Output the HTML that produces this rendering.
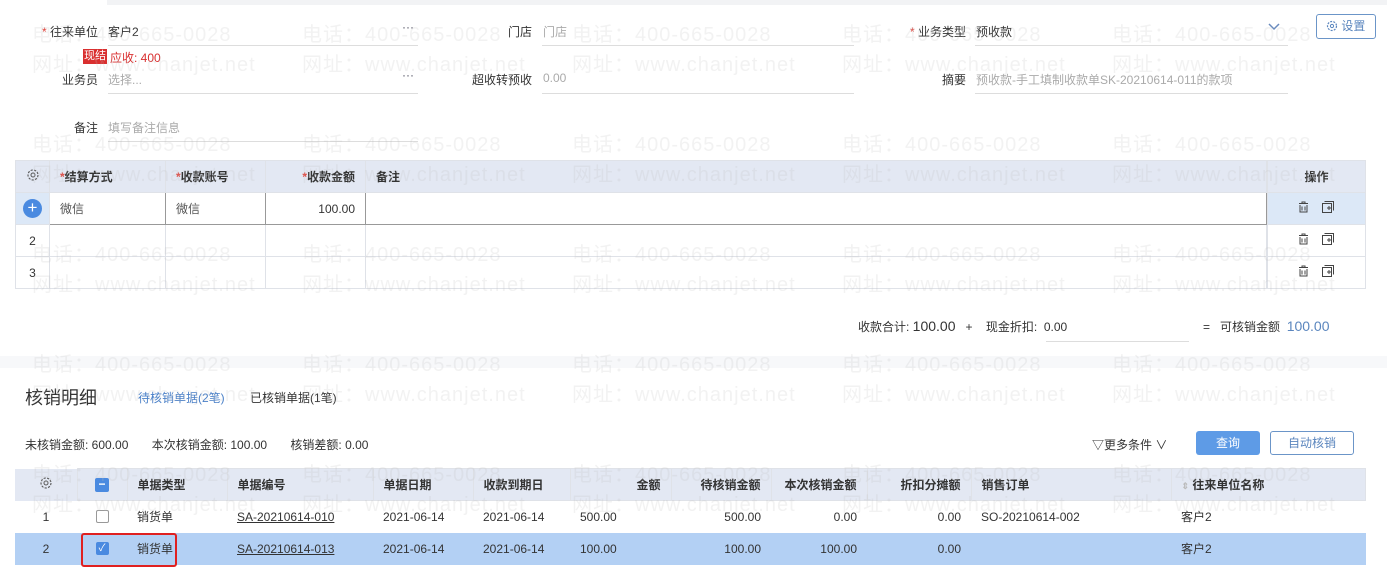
<!DOCTYPE html>
<html><head><meta charset="utf-8"><style>
*{margin:0;padding:0;box-sizing:border-box}
body{width:1387px;height:569px;background:#fff;font-family:"Liberation Sans","Noto Sans CJK SC",sans-serif;font-size:12px;color:#333;position:relative;overflow:hidden}
.a{position:absolute;white-space:nowrap}
.lbl{text-align:right}
.req{color:#e0443c}
.ul{position:absolute;height:1px;background:#ddd}
.ph{color:#aaa}
.wm{position:absolute;color:rgba(190,190,190,.2);font-size:20px;white-space:nowrap;z-index:5;pointer-events:none;letter-spacing:1px}
table{border-collapse:collapse;position:absolute;table-layout:fixed}
td,th{height:32px;font-size:12px;font-weight:normal;padding:0 10px;white-space:nowrap;border:1px solid #dfe2e8}
th{background:#e3e8f3;text-align:left;color:#333;font-weight:bold}
.r{text-align:right}.c{text-align:center}
</style></head><body>
<div class="a" style="left:107px;top:0;width:1280px;height:5px;background:#f2f3f5"></div>

<div class="a lbl" style="left:20px;top:23px;width:78px"><span class="req">* </span>往来单位</div>
<div class="a" style="left:108px;top:23px">客户2</div>
<div class="a" style="left:402px;top:20px;color:#556;">···</div>
<div class="ul" style="left:108px;top:45px;width:310px"></div>
<div class="a lbl" style="left:480px;top:23px;width:52px">门店</div>
<div class="a ph" style="left:543px;top:23px">门店</div>
<div class="ul" style="left:542px;top:45px;width:312px"></div>
<div class="a lbl" style="left:880px;top:23px;width:86px"><span class="req">* </span>业务类型</div>
<div class="a" style="left:976px;top:23px">预收款</div>
<svg class="a" style="left:1267px;top:22px" width="14" height="10"><path d="M2 2l5 5 5-5" fill="none" stroke="#6a8bbd" stroke-width="1.5"/></svg>
<div class="ul" style="left:975px;top:45px;width:313px"></div>
<div class="a" style="left:1316px;top:14px;width:60px;height:25px;border:1px solid #6b95c8;border-radius:3px;color:#5b86be;font-size:12px;line-height:23px;padding-left:9px"><svg width="12" height="12" style="vertical-align:-2px"><circle cx="6" cy="6" r="4.5" fill="none" stroke="#5b86be" stroke-width="1.2" stroke-dasharray="2 1.2"/><circle cx="6" cy="6" r="1.6" fill="none" stroke="#5b86be"/></svg> 设置</div>
<div class="a" style="left:83px;top:49px;width:24px;height:15px;background:#d92f2f;color:#fff;font-size:11px;line-height:15px;text-align:center">现结</div>
<div class="a" style="left:110px;top:49px;color:#d92f2f;font-size:12px">应收: 400</div>

<div class="a lbl" style="left:20px;top:71px;width:78px">业务员</div>
<div class="a ph" style="left:108px;top:71px">选择...</div>
<div class="a" style="left:402px;top:68px;color:#556">···</div>
<div class="ul" style="left:108px;top:93px;width:310px"></div>
<div class="a lbl" style="left:440px;top:71px;width:92px">超收转预收</div>
<div class="a ph" style="left:543px;top:71px">0.00</div>
<div class="ul" style="left:542px;top:93px;width:312px"></div>
<div class="a lbl" style="left:900px;top:71px;width:66px">摘要</div>
<div class="a ph" style="left:976px;top:71px">预收款-手工填制收款单SK-20210614-011的款项</div>
<div class="ul" style="left:975px;top:93px;width:313px"></div>

<div class="a lbl" style="left:40px;top:119px;width:58px">备注</div>
<div class="a ph" style="left:108px;top:119px">填写备注信息</div>
<div class="ul" style="left:108px;top:141px;width:310px"></div>

<table style="left:15px;top:160px;width:1252px">
<colgroup><col style="width:34px"><col style="width:116px"><col style="width:100px"><col style="width:100px"><col></colgroup>
<tr><th class="c" style="padding:0"><svg width="14" height="14"><circle cx="7" cy="7" r="5" fill="none" stroke="#555" stroke-width="1.1" stroke-dasharray="2.2 1.3"/><circle cx="7" cy="7" r="2" fill="none" stroke="#555"/></svg></th><th><span class="req">*</span>结算方式</th><th><span class="req">*</span>收款账号</th><th class="r"><span class="req">*</span>收款金额</th><th>备注</th></tr>
<tr><td class="c" style="padding:0;background:#dce8f7"><div style="width:19px;height:19px;border-radius:50%;background:#4a8ae0;color:#fff;font-size:17px;line-height:18px;margin:auto">+</div></td><td style="border:1px solid #999;color:#555">微信</td><td style="border:1px solid #999;color:#555">微信</td><td class="r" style="border:1px solid #999">100.00</td><td style="border:1px solid #999"></td></tr>
<tr><td class="c">2</td><td></td><td></td><td></td><td></td></tr>
<tr><td class="c">3</td><td></td><td></td><td></td><td></td></tr>
</table>
<table style="left:1267px;top:160px;width:99px">
<tr><th class="c">操作</th></tr>
<tr><td class="c" style="background:#dce8f7"><svg width="40" height="14"><g fill="none" stroke="#444" stroke-width="1"><path d="M2 3.5h9M5 3.5V2h3v1.5M3 5v7h7V5M5 6.5v4M8 6.5v4"/><rect x="25.5" y="3.5" width="9" height="9"/><path d="M27.5 1.5h9v9M30 8h4M32 6v4"/></g></svg></td></tr>
<tr><td class="c"><svg width="40" height="14"><g fill="none" stroke="#444" stroke-width="1"><path d="M2 3.5h9M5 3.5V2h3v1.5M3 5v7h7V5M5 6.5v4M8 6.5v4"/><rect x="25.5" y="3.5" width="9" height="9"/><path d="M27.5 1.5h9v9M30 8h4M32 6v4"/></g></svg></td></tr>
<tr><td class="c"><svg width="40" height="14"><g fill="none" stroke="#444" stroke-width="1"><path d="M2 3.5h9M5 3.5V2h3v1.5M3 5v7h7V5M5 6.5v4M8 6.5v4"/><rect x="25.5" y="3.5" width="9" height="9"/><path d="M27.5 1.5h9v9M30 8h4M32 6v4"/></g></svg></td></tr>
</table>

<div class="a" style="left:858px;top:318px">收款合计: <span style="font-size:14px">100.00</span>&nbsp;&nbsp;&nbsp;+&nbsp;&nbsp;&nbsp;&nbsp;现金折扣: &nbsp;0.00</div>
<div class="ul" style="left:1046px;top:341px;width:143px"></div>
<div class="a" style="left:1203px;top:318px">=&nbsp;&nbsp;&nbsp;可核销金额 &nbsp;<span style="font-size:14px;color:#5b86be">100.00</span></div>

<div class="a" style="left:0;top:356px;width:1387px;height:12px;background:#f7f8fa"></div>

<div class="a" style="left:25px;top:384px;font-size:18px;color:#333">核销明细</div>
<div class="a" style="left:138px;top:389px;color:#4a80c8">待核销单据(2笔)</div>
<div class="a" style="left:250px;top:389px">已核销单据(1笔)</div>
<div class="a" style="left:25px;top:436px">未核销金额: 600.00&nbsp;&nbsp;&nbsp;&nbsp;&nbsp;&nbsp;&nbsp;本次核销金额: 100.00&nbsp;&nbsp;&nbsp;&nbsp;&nbsp;&nbsp;&nbsp;核销差额: 0.00</div>
<div class="a" style="left:1092px;top:436px">▽更多条件 ∨</div>
<div class="a" style="left:1196px;top:431px;width:64px;height:24px;background:#5e9be6;border-radius:3px;color:#fff;line-height:24px;text-align:center">查询</div>
<div class="a" style="left:1270px;top:431px;width:84px;height:24px;border:1px solid #6b95c8;border-radius:3px;color:#5b86be;line-height:22px;text-align:center">自动核销</div>

<table style="left:15px;top:468px;width:1351px">
<colgroup><col style="width:62px"><col style="width:50px"><col style="width:100px"><col style="width:146px"><col style="width:100px"><col style="width:97px"><col style="width:101px"><col style="width:100px"><col style="width:96px"><col style="width:104px"><col style="width:200px"><col></colgroup>
<tr><th class="c" style="padding:0;border:none"><svg width="14" height="14"><circle cx="7" cy="7" r="5" fill="none" stroke="#555" stroke-width="1.1" stroke-dasharray="2.2 1.3"/><circle cx="7" cy="7" r="2" fill="none" stroke="#555"/></svg></th><th class="c" style="padding:0"><div style="width:14px;height:14px;background:#4a8ae0;border-radius:2px;margin:auto;color:#fff;line-height:13px;font-size:12px">−</div></th><th>单据类型</th><th>单据编号</th><th>单据日期</th><th>收款到期日</th><th class="r">金额</th><th class="r">待核销金额</th><th class="r">本次核销金额</th><th class="r">折扣分摊额</th><th>销售订单</th><th><span style="color:#bbb;font-size:9px">⇕</span> 往来单位名称</th></tr>
<tr><td class="c" style="border:none">1</td><td class="c" style="border:none"><div style="width:13px;height:13px;border:1px solid #999;border-radius:2px;margin:auto"></div></td><td style="border:none">销货单</td><td style="border:none;text-decoration:underline">SA-20210614-010</td><td style="border:none">2021-06-14</td><td style="border:none">2021-06-14</td><td style="border:none">500.00</td><td class="r" style="border:none">500.00</td><td class="r" style="border:none">0.00</td><td class="r" style="border:none">0.00</td><td style="border:none">SO-20210614-002</td><td style="border:none">客户2</td></tr>
<tr style="background:#b3d0f4"><td class="c" style="border:none">2</td><td class="c" style="border:none"><div style="width:13px;height:13px;background:#4a8ae0;border-radius:2px;margin:auto;color:#fff;font-size:10px;line-height:13px">✓</div></td><td style="border:none">销货单</td><td style="border:none;text-decoration:underline">SA-20210614-013</td><td style="border:none">2021-06-14</td><td style="border:none">2021-06-14</td><td style="border:none">100.00</td><td class="r" style="border:none">100.00</td><td class="r" style="border:none">100.00</td><td class="r" style="border:none">0.00</td><td style="border:none"></td><td style="border:none">客户2</td></tr>
</table>
<div class="a" style="left:81px;top:533px;width:96px;height:34px;border:2px solid #e02020;border-radius:3px"></div>

<div class="wm" style="left:32px;top:18px">电话：400-665-0028</div><div class="wm" style="left:302px;top:18px">电话：400-665-0028</div><div class="wm" style="left:572px;top:18px">电话：400-665-0028</div><div class="wm" style="left:842px;top:18px">电话：400-665-0028</div><div class="wm" style="left:1112px;top:18px">电话：400-665-0028</div>
<div class="wm" style="left:32px;top:48px">网址：www.chanjet.net</div><div class="wm" style="left:302px;top:48px">网址：www.chanjet.net</div><div class="wm" style="left:572px;top:48px">网址：www.chanjet.net</div><div class="wm" style="left:842px;top:48px">网址：www.chanjet.net</div><div class="wm" style="left:1112px;top:48px">网址：www.chanjet.net</div>
<div class="wm" style="left:32px;top:128px">电话：400-665-0028</div><div class="wm" style="left:302px;top:128px">电话：400-665-0028</div><div class="wm" style="left:572px;top:128px">电话：400-665-0028</div><div class="wm" style="left:842px;top:128px">电话：400-665-0028</div><div class="wm" style="left:1112px;top:128px">电话：400-665-0028</div>
<div class="wm" style="left:32px;top:158px">网址：www.chanjet.net</div><div class="wm" style="left:302px;top:158px">网址：www.chanjet.net</div><div class="wm" style="left:572px;top:158px">网址：www.chanjet.net</div><div class="wm" style="left:842px;top:158px">网址：www.chanjet.net</div><div class="wm" style="left:1112px;top:158px">网址：www.chanjet.net</div>
<div class="wm" style="left:32px;top:238px">电话：400-665-0028</div><div class="wm" style="left:302px;top:238px">电话：400-665-0028</div><div class="wm" style="left:572px;top:238px">电话：400-665-0028</div><div class="wm" style="left:842px;top:238px">电话：400-665-0028</div><div class="wm" style="left:1112px;top:238px">电话：400-665-0028</div>
<div class="wm" style="left:32px;top:268px">网址：www.chanjet.net</div><div class="wm" style="left:302px;top:268px">网址：www.chanjet.net</div><div class="wm" style="left:572px;top:268px">网址：www.chanjet.net</div><div class="wm" style="left:842px;top:268px">网址：www.chanjet.net</div><div class="wm" style="left:1112px;top:268px">网址：www.chanjet.net</div>
<div class="wm" style="left:32px;top:348px">电话：400-665-0028</div><div class="wm" style="left:302px;top:348px">电话：400-665-0028</div><div class="wm" style="left:572px;top:348px">电话：400-665-0028</div><div class="wm" style="left:842px;top:348px">电话：400-665-0028</div><div class="wm" style="left:1112px;top:348px">电话：400-665-0028</div>
<div class="wm" style="left:32px;top:378px">网址：www.chanjet.net</div><div class="wm" style="left:302px;top:378px">网址：www.chanjet.net</div><div class="wm" style="left:572px;top:378px">网址：www.chanjet.net</div><div class="wm" style="left:842px;top:378px">网址：www.chanjet.net</div><div class="wm" style="left:1112px;top:378px">网址：www.chanjet.net</div>
<div class="wm" style="left:32px;top:458px">电话：400-665-0028</div><div class="wm" style="left:302px;top:458px">电话：400-665-0028</div><div class="wm" style="left:572px;top:458px">电话：400-665-0028</div><div class="wm" style="left:842px;top:458px">电话：400-665-0028</div><div class="wm" style="left:1112px;top:458px">电话：400-665-0028</div>
<div class="wm" style="left:32px;top:488px">网址：www.chanjet.net</div><div class="wm" style="left:302px;top:488px">网址：www.chanjet.net</div><div class="wm" style="left:572px;top:488px">网址：www.chanjet.net</div><div class="wm" style="left:842px;top:488px">网址：www.chanjet.net</div><div class="wm" style="left:1112px;top:488px">网址：www.chanjet.net</div>
</body></html>
